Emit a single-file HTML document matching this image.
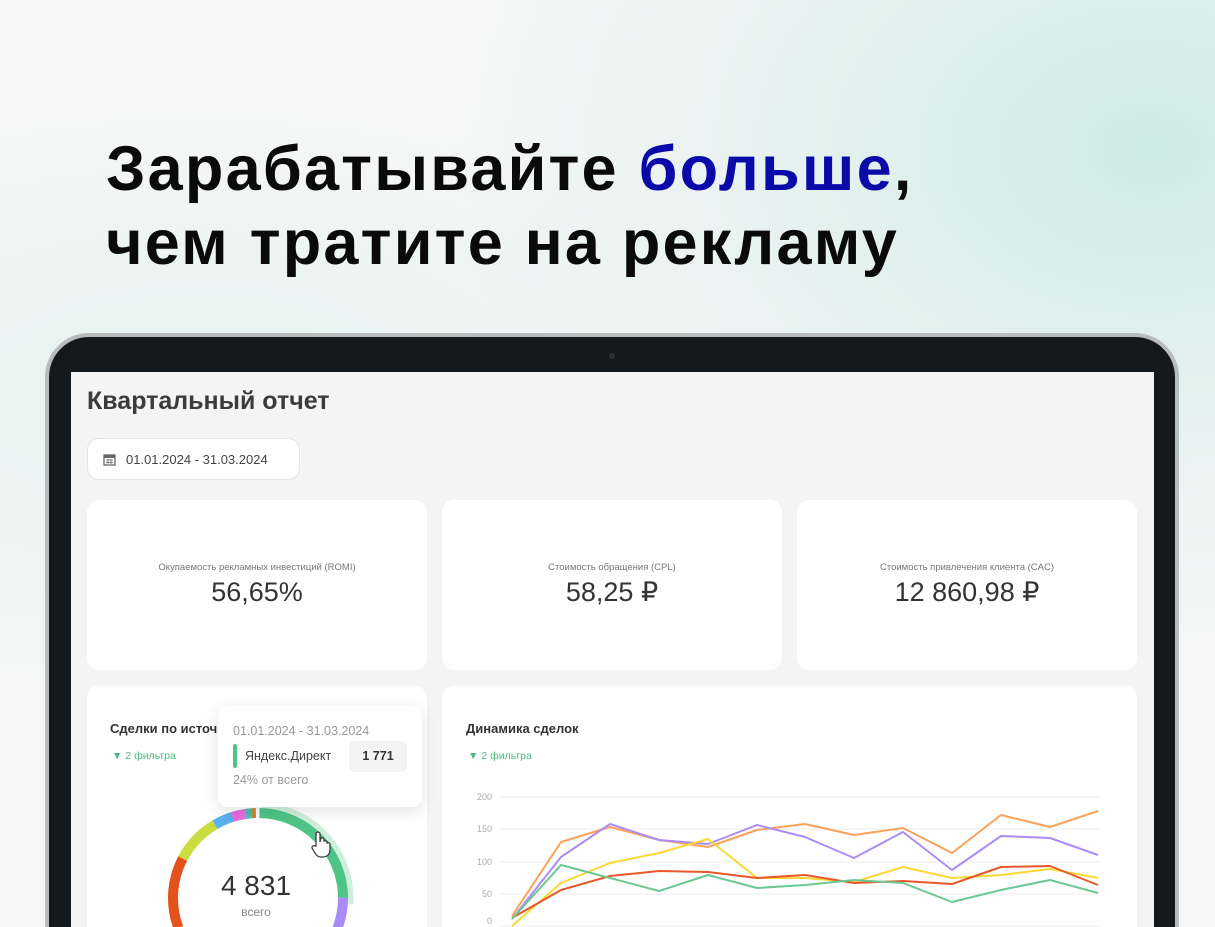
<!DOCTYPE html>
<html><head><meta charset="utf-8"><style>
*{margin:0;padding:0;box-sizing:border-box}
html{width:1215px;height:927px;overflow:hidden}
body{width:1215px;height:927px;overflow:hidden;position:relative;font-family:"Liberation Sans",sans-serif;
background:radial-gradient(ellipse 700px 500px at 1150px 150px,#cdeae4 0%,rgba(215,238,233,.6) 45%,rgba(245,246,246,0) 100%),radial-gradient(ellipse 600px 300px at 200px 400px,#e4f3ef 0%,rgba(240,245,244,0) 100%),#f6f6f6;}
.h{position:absolute;left:106px;font-weight:700;font-size:63px;color:#0a0a0a;letter-spacing:2.2px;line-height:1}
.h b{color:#0a0aa8}
.lap{position:absolute;left:45px;top:333px;width:1134px;height:594px;border-radius:44px 44px 0 0;background:#16191b;border:4px solid #b9bcbe;border-bottom:0}
.cam{position:absolute;left:609px;top:353px;width:6px;height:6px;border-radius:50%;background:#2b2f31}
.scr{position:absolute;left:71px;top:372px;width:1083px;height:555px;background:#f4f4f4}
.t{position:absolute;font-size:25px;font-weight:700;color:#3b3b3b;left:87px;top:387px}
.date{position:absolute;left:87px;top:438px;width:213px;height:42px;background:#fff;border:1px solid #e4e4e4;border-radius:12px;font-size:13px;color:#444;padding:13px 0 0 38px}
.card{position:absolute;background:#fff;border-radius:12px}
.k{text-align:center}
.k .l{font-size:9.5px;color:#777;margin-top:62px}
.k .v{font-size:27px;color:#333;margin-top:4px}
.ct{position:absolute;font-size:13px;font-weight:700;color:#333}
.f{position:absolute;font-size:10.5px;color:#4cbb7e}
.ax{position:absolute;font-size:9px;color:#aaa;width:22px;text-align:right;left:470px}
</style></head><body>
<div class="h" style="top:138px">Зарабатывайте <b>больше</b>,</div>
<div class="h" style="top:212px">чем тратите на рекламу</div>
<div class="lap"></div>
<div class="cam"></div>
<div class="scr"></div>
<div class="t">Квартальный отчет</div>
<div class="date"><svg style="position:absolute;left:15px;top:14px" width="13" height="13" viewBox="0 0 13 13"><rect x="1" y="2" width="11" height="10" fill="none" stroke="#666" stroke-width="1.3"/><rect x="1" y="2" width="11" height="3" fill="#666"/><path d="M3 7h7M3 9.5h7M5 6v5M8 6v5" stroke="#666" stroke-width=".8"/></svg>01.01.2024 - 31.03.2024</div>
<div class="card k" style="left:87px;top:500px;width:340px;height:170px"><div class="l">Окупаемость рекламных инвестиций (ROMI)</div><div class="v">56,65%</div></div>
<div class="card k" style="left:442px;top:500px;width:340px;height:170px"><div class="l">Стоимость обращения (CPL)</div><div class="v">58,25 ₽</div></div>
<div class="card k" style="left:797px;top:500px;width:340px;height:170px"><div class="l">Стоимость привлечения клиента (CAC)</div><div class="v">12 860,98 ₽</div></div>
<div class="card" style="left:87px;top:686px;width:340px;height:241px;border-radius:12px 12px 0 0"></div>
<div class="card" style="left:442px;top:686px;width:695px;height:241px;border-radius:12px 12px 0 0"></div>
<div class="ct" style="left:110px;top:721px">Сделки по источ</div>
<div class="f" style="left:112px;top:750px">▼ 2 фильтра</div>
<div class="ct" style="left:466px;top:721px">Динамика сделок</div>
<div class="f" style="left:468px;top:750px">▼ 2 фильтра</div>
<svg style="position:absolute;left:0;top:0" width="1215" height="927">
<g transform="rotate(-90 258 898)" fill="none">
<circle cx="258" cy="898" r="92" stroke="#5fc98f" stroke-opacity=".3" stroke-width="7" pathLength="360" stroke-dasharray="92 268" stroke-dashoffset="-2"/>
<circle cx="258" cy="898" r="85" stroke="#4fc487" stroke-width="10" pathLength="360" stroke-dasharray="89 271" stroke-dashoffset="-1"/>
<circle cx="258" cy="898" r="85" stroke="#a98af7" stroke-width="10" pathLength="360" stroke-dasharray="110 250" stroke-dashoffset="-90"/>
<circle cx="258" cy="898" r="85" stroke="#fba25a" stroke-width="10" pathLength="360" stroke-dasharray="50 310" stroke-dashoffset="-200"/>
<circle cx="258" cy="898" r="85" stroke="#e2521a" stroke-width="10" pathLength="360" stroke-dasharray="48 312" stroke-dashoffset="-250"/>
<circle cx="258" cy="898" r="85" stroke="#cbdc3e" stroke-width="10" pathLength="360" stroke-dasharray="32 328" stroke-dashoffset="-298"/>
<circle cx="258" cy="898" r="85" stroke="#5ab0ee" stroke-width="10" pathLength="360" stroke-dasharray="13 347" stroke-dashoffset="-330"/>
<circle cx="258" cy="898" r="85" stroke="#e86be0" stroke-width="10" pathLength="360" stroke-dasharray="9 351" stroke-dashoffset="-343"/>
<circle cx="258" cy="898" r="85" stroke="#4bbfb0" stroke-width="10" pathLength="360" stroke-dasharray="4 356" stroke-dashoffset="-352"/>
<circle cx="258" cy="898" r="85" stroke="#c58a3a" stroke-width="10" pathLength="360" stroke-dasharray="3 357" stroke-dashoffset="-356"/>
</g>
<text x="256" y="895" text-anchor="middle" font-family="Liberation Sans" font-size="28" fill="#333">4 831</text>
<text x="256" y="916" text-anchor="middle" font-family="Liberation Sans" font-size="12" fill="#888">всего</text>
<path d="M316 846v-12a2 2 0 0 1 4 0v8l1-4a2 2 0 0 1 3 1l0 2a2 2 0 0 1 3 1v1a2 2 0 0 1 3 1v6c0 4-3 7-7 7h-2c-3 0-5-2-6-4l-3-5a2 2 0 0 1 3-2z" fill="#fff" stroke="#333" stroke-width="1.2"/>
<g stroke="#eee" stroke-width="1"><line x1="500" y1="797" x2="1100" y2="797"/><line x1="500" y1="829" x2="1100" y2="829"/><line x1="500" y1="862" x2="1100" y2="862"/><line x1="500" y1="894" x2="1100" y2="894"/><line x1="500" y1="926" x2="1100" y2="926"/></g>
<g fill="none" stroke-width="2" stroke-linejoin="round">
<polyline stroke="#fba25a" points="512,916 561,842 610,827 659,840 708,847 757,830 805,824 854,835 903,828 952,853 1001,815 1050,827 1098,811"/>
<polyline stroke="#ab8cf8" points="512,919 561,857 610,824 659,840 708,844 757,825 805,837 854,858 903,832 952,870 1001,836 1050,838 1098,855"/>
<polyline stroke="#fdd835" points="512,926 561,883 610,863 659,853 708,839 757,878 805,878 854,882 903,867 952,878 1001,875 1050,869 1098,878"/>
<polyline stroke="#e8582a" points="512,918 561,890 610,876 659,871 708,872 757,878 805,875 854,883 903,881 952,884 1001,867 1050,866 1098,885"/>
<polyline stroke="#6cc895" points="512,919 561,865 610,878 659,891 708,875 757,888 805,885 854,880 903,883 952,902 1001,890 1050,880 1098,893"/>
</g>
</svg>
<div class="ax" style="top:792px">200</div><div class="ax" style="top:824px">150</div><div class="ax" style="top:857px">100</div><div class="ax" style="top:889px">50</div><div class="ax" style="top:916px">0</div>
<div style="position:absolute;left:218px;top:706px;width:204px;height:101px;background:#fff;border-radius:10px;box-shadow:0 4px 16px rgba(0,0,0,.12)">
<div style="position:absolute;left:15px;top:18px;font-size:12.5px;color:#999">01.01.2024 - 31.03.2024</div>
<div style="position:absolute;left:15px;top:38px;width:4px;height:24px;background:#4fc487;border-radius:2px"></div>
<div style="position:absolute;left:27px;top:43px;font-size:12.5px;color:#444">Яндекс.Директ</div>
<div style="position:absolute;left:131px;top:35px;width:58px;height:31px;background:#f3f3f3;border-radius:6px;font-size:12.5px;color:#333;font-weight:700;text-align:center;line-height:31px">1 771</div>
<div style="position:absolute;left:15px;top:67px;font-size:12.5px;color:#999">24% от всего</div>
</div>
</body></html>
